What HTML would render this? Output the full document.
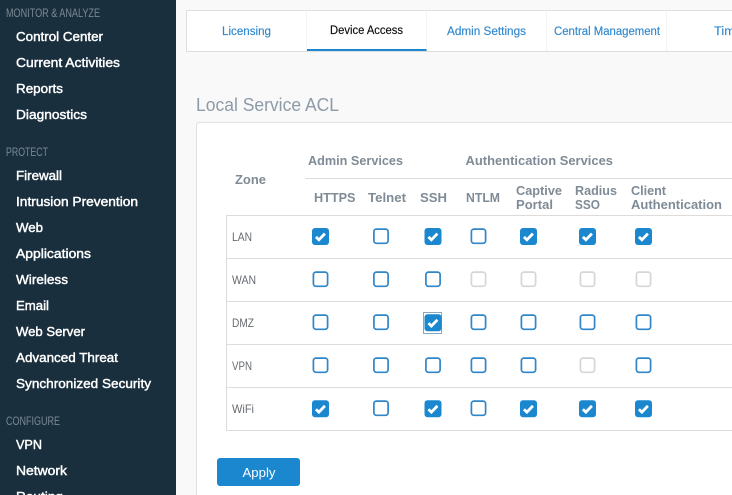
<!DOCTYPE html>
<html lang="en">
<head>
<meta charset="utf-8">
<title>Local Service ACL</title>
<style>
html,body{margin:0;padding:0;width:732px;height:495px;overflow:hidden;background:#f9f9f9}
svg{display:block}
text{font-family:"Liberation Sans",sans-serif;white-space:pre}
.n text{font-size:13px;fill:#fff;stroke:#fff;stroke-width:.42px}
.s text{font-size:12px;fill:#7b8994}
.t text{font-size:11.5px;fill:#2f88cf;stroke:#2f88cf;stroke-width:.15px}
.h text{font-size:12.5px;font-weight:bold;fill:#7f8b96}
.r text{font-size:12px;fill:#666b71}
</style>
</head>
<body>
<svg width="732" height="495" viewBox="0 0 732 495" xmlns="http://www.w3.org/2000/svg">
<defs>
<clipPath id="v"><rect width="732" height="495"/></clipPath>
<g id="c"><rect x="-8.5" y="-8.5" width="17" height="17" rx="3" fill="#1a87cf"/><path d="M-4.6 .4L-1.6 3.3L4.4 -2.9" fill="none" stroke="#fff" stroke-width="2.8"/></g>
<rect id="u" x="-7.1" y="-7.1" width="14.2" height="14.2" rx="2.5" fill="#fff" stroke="#2f86c8" stroke-width="1.7"/>
<rect id="d" x="-7.1" y="-7.1" width="14.2" height="14.2" rx="2.5" fill="#fff" stroke="#d6d6d6" stroke-width="1.7"/>
</defs>

<g clip-path="url(#v)">
<rect width="732" height="495" fill="#f9f9f9"/>
<rect width="176" height="495" fill="#1a2f3e"/>

<g class="s">
<text x="6" y="17" textLength="94" lengthAdjust="spacingAndGlyphs">MONITOR &amp; ANALYZE</text>
<text x="6" y="156" textLength="42" lengthAdjust="spacingAndGlyphs">PROTECT</text>
<text x="6" y="425" textLength="54" lengthAdjust="spacingAndGlyphs">CONFIGURE</text>
</g>
<g class="n">
<text x="16" y="41" textLength="87" lengthAdjust="spacingAndGlyphs">Control Center</text>
<text x="16" y="67" textLength="104" lengthAdjust="spacingAndGlyphs">Current Activities</text>
<text x="16" y="93" textLength="47" lengthAdjust="spacingAndGlyphs">Reports</text>
<text x="16" y="119" textLength="71" lengthAdjust="spacingAndGlyphs">Diagnostics</text>
<text x="16" y="180" textLength="46" lengthAdjust="spacingAndGlyphs">Firewall</text>
<text x="16" y="206" textLength="122" lengthAdjust="spacingAndGlyphs">Intrusion Prevention</text>
<text x="16" y="232" textLength="27" lengthAdjust="spacingAndGlyphs">Web</text>
<text x="16" y="258" textLength="75" lengthAdjust="spacingAndGlyphs">Applications</text>
<text x="16" y="284" textLength="52" lengthAdjust="spacingAndGlyphs">Wireless</text>
<text x="16" y="310" textLength="33" lengthAdjust="spacingAndGlyphs">Email</text>
<text x="16" y="336" textLength="69" lengthAdjust="spacingAndGlyphs">Web Server</text>
<text x="16" y="362" textLength="102" lengthAdjust="spacingAndGlyphs">Advanced Threat</text>
<text x="16" y="388" textLength="135" lengthAdjust="spacingAndGlyphs">Synchronized Security</text>
<text x="16" y="449" textLength="26" lengthAdjust="spacingAndGlyphs">VPN</text>
<text x="16" y="475" textLength="51" lengthAdjust="spacingAndGlyphs">Network</text>
<text x="16" y="501" textLength="47" lengthAdjust="spacingAndGlyphs">Routing</text>
</g>

<!-- Tabs -->
<path d="M732 10.5H186.5V51.5H732Z" fill="#fff"/>
<path d="M732 10.5H186.5V51.5H732" fill="none" stroke="#dfdfdf"/>
<path d="M306.5 11V51M426.5 11V51M546.5 11V51M666.5 11V51" stroke="#f3f3f3"/>
<rect x="307" y="49" width="119.5" height="2" fill="#1a87cf"/>
<g class="t">
<text x="222" y="35" textLength="49" lengthAdjust="spacingAndGlyphs">Licensing</text>
<text x="330" y="34" textLength="73" lengthAdjust="spacingAndGlyphs" style="fill:#0c0c0c;stroke:#0c0c0c">Device Access</text>
<text x="447" y="35" textLength="79" lengthAdjust="spacingAndGlyphs">Admin Settings</text>
<text x="554" y="35" textLength="106" lengthAdjust="spacingAndGlyphs">Central Management</text>
<text x="714" y="35" textLength="28" lengthAdjust="spacingAndGlyphs">Time</text>
</g>

<text x="196" y="111" font-size="18.5" fill="#8d9ba8" textLength="143" lengthAdjust="spacingAndGlyphs">Local Service ACL</text>

<!-- Panel -->
<path d="M732 122.5H199.5Q196.5 122.5 196.5 125.5V495H732Z" fill="#fff"/>
<path d="M732 122.5H199.5Q196.5 122.5 196.5 125.5V495" fill="none" stroke="#e1e1e1"/>

<!-- Table lines -->
<g stroke="#dcdcdc" fill="none">
<path d="M305 178.5H732"/>
<path d="M226.5 215V431"/>
<path d="M226 215.5H732M226 258.5H732M226 301.5H732M226 344.5H732M226 387.5H732M226 430.5H732"/>
</g>

<g class="h">
<text x="308" y="165" textLength="95" lengthAdjust="spacingAndGlyphs">Admin Services</text>
<text x="465.5" y="165" textLength="147.5" lengthAdjust="spacingAndGlyphs">Authentication Services</text>
<text x="235" y="184" textLength="31" lengthAdjust="spacingAndGlyphs">Zone</text>
<text x="314" y="202" textLength="41.5" lengthAdjust="spacingAndGlyphs">HTTPS</text>
<text x="368" y="202" textLength="38" lengthAdjust="spacingAndGlyphs">Telnet</text>
<text x="420" y="202" textLength="27" lengthAdjust="spacingAndGlyphs">SSH</text>
<text x="466" y="202" textLength="34" lengthAdjust="spacingAndGlyphs">NTLM</text>
<text x="516" y="195" textLength="46" lengthAdjust="spacingAndGlyphs">Captive</text>
<text x="516" y="209" textLength="37" lengthAdjust="spacingAndGlyphs">Portal</text>
<text x="575" y="195" textLength="42" lengthAdjust="spacingAndGlyphs">Radius</text>
<text x="575" y="209" textLength="25" lengthAdjust="spacingAndGlyphs">SSO</text>
<text x="631" y="195" textLength="35" lengthAdjust="spacingAndGlyphs">Client</text>
<text x="631" y="209" textLength="91" lengthAdjust="spacingAndGlyphs">Authentication</text>
</g>

<g class="r">
<text x="232" y="241" textLength="20" lengthAdjust="spacingAndGlyphs">LAN</text>
<text x="232" y="284" textLength="24" lengthAdjust="spacingAndGlyphs">WAN</text>
<text x="232" y="327" textLength="22" lengthAdjust="spacingAndGlyphs">DMZ</text>
<text x="232" y="370" textLength="20" lengthAdjust="spacingAndGlyphs">VPN</text>
<text x="232" y="413" textLength="22" lengthAdjust="spacingAndGlyphs">WiFi</text>
</g>

<!-- LAN -->
<use href="#c" x="320.5" y="236.5"/>
<use href="#u" x="381" y="236.2"/>
<use href="#c" x="433" y="236.5"/>
<use href="#u" x="478.5" y="236.2"/>
<use href="#c" x="528.5" y="236.5"/>
<use href="#c" x="587.5" y="236.5"/>
<use href="#c" x="643.5" y="236.5"/>
<!-- WAN -->
<use href="#u" x="320.5" y="279.2"/>
<use href="#u" x="381" y="279.2"/>
<use href="#u" x="433" y="279.2"/>
<use href="#d" x="478.5" y="279.2"/>
<use href="#d" x="528.5" y="279.2"/>
<use href="#d" x="587.5" y="279.2"/>
<use href="#d" x="643.5" y="279.2"/>
<!-- DMZ -->
<use href="#u" x="320.5" y="322.2"/>
<use href="#u" x="381" y="322.2"/>
<use href="#c" x="433" y="322.7"/>
<rect x="423.5" y="312.5" width="18" height="21" fill="none" stroke="#0f4f88" stroke-dasharray="1 1" shape-rendering="crispEdges"/>
<use href="#u" x="478.5" y="322.2"/>
<use href="#u" x="528.5" y="322.2"/>
<use href="#u" x="587.5" y="322.2"/>
<use href="#u" x="643.5" y="322.2"/>
<!-- VPN -->
<use href="#u" x="320.5" y="365.2"/>
<use href="#u" x="381" y="365.2"/>
<use href="#u" x="433" y="365.2"/>
<use href="#u" x="478.5" y="365.2"/>
<use href="#u" x="528.5" y="365.2"/>
<use href="#d" x="587.5" y="365.2"/>
<use href="#u" x="643.5" y="365.2"/>
<!-- WiFi -->
<use href="#c" x="320.5" y="408.8"/>
<use href="#u" x="381" y="408.2"/>
<use href="#c" x="433" y="408.8"/>
<use href="#u" x="478.5" y="408.2"/>
<use href="#c" x="528.5" y="408.8"/>
<use href="#c" x="587.5" y="408.8"/>
<use href="#c" x="643.5" y="408.8"/>

<!-- Apply -->
<rect x="217" y="458" width="83" height="28" rx="3" fill="#1a87cf"/>
<text x="242.5" y="477" font-size="13" fill="#fff" textLength="33" lengthAdjust="spacingAndGlyphs">Apply</text>
</g>
</svg>
</body>
</html>
